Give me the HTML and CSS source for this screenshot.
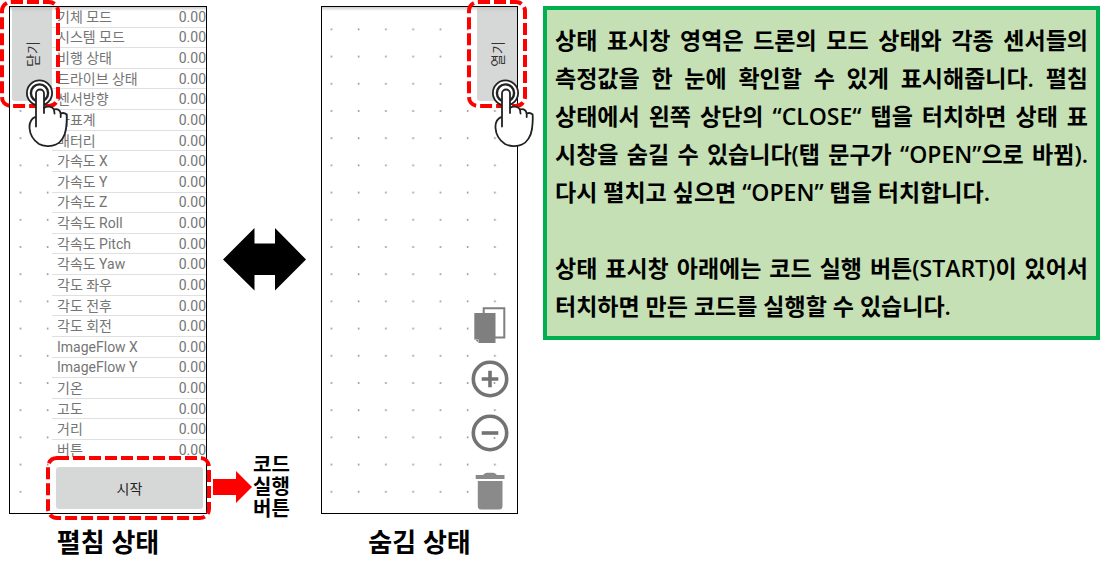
FILE: index.html
```html
<!DOCTYPE html>
<html lang="ko">
<head>
<meta charset="utf-8">
<title>상태 표시창</title>
<link rel="stylesheet" href="styles.css">
</head>
<body>
<svg class="defs" aria-hidden="true">
  <defs>
    <pattern id="dots" width="27.25" height="27.2" patternUnits="userSpaceOnUse">
      <rect x="8.6" y="21.6" width="1.6" height="1.6" fill="#8c8c8c"/>
    </pattern>
    <symbol id="hand" viewBox="0 0 46 70">
      <g fill="#fff" stroke="#222" stroke-width="1.8" stroke-linejoin="round" stroke-linecap="round">
        <circle cx="15.5" cy="15" r="12.6"/>
        <circle cx="15.5" cy="15" r="8.6" stroke-width="2.4"/>
        <path d="M12 38.7C6 41 5.200 45 5.500 50C6 57 9 62 15 66C19 68.300 27 69 32 66.500C37 64.500 41 58 42 51C42.600 46 43 40 42.600 36.500C41 35 39 34.500 36.700 35.500C36 31.500 33 30.500 30 31.500C28 28.300 23 27.500 20 30V15.500A4 4 0 0 0 12 15.500V48.500"/>
        <path d="M20 30V35M30 31.500L30.500 35.500M36.700 35.500V39" fill="none"/>
      </g>
    </symbol>
  </defs>
</svg>
<main class="page">
  <figure class="figure">
    <div class="phone">
      <svg class="canvas" aria-hidden="true"><rect width="43" height="100%" fill="url(#dots)" transform="translate(1 0)"/></svg>
      <div class="open">
        <button class="tab" type="button"><span>닫기</span></button>
        <div class="panel">
          <table class="status">
            <tbody>
              <tr><th scope="row">기체 모드</th><td>0.00</td></tr>
              <tr><th scope="row">시스템 모드</th><td>0.00</td></tr>
              <tr><th scope="row">비행 상태</th><td>0.00</td></tr>
              <tr><th scope="row">드라이브 상태</th><td>0.00</td></tr>
              <tr><th scope="row">센서방향</th><td>0.00</td></tr>
              <tr><th scope="row">좌표계</th><td>0.00</td></tr>
              <tr><th scope="row">배터리</th><td>0.00</td></tr>
              <tr><th scope="row">가속도 X</th><td>0.00</td></tr>
              <tr><th scope="row">가속도 Y</th><td>0.00</td></tr>
              <tr><th scope="row">가속도 Z</th><td>0.00</td></tr>
              <tr><th scope="row">각속도 Roll</th><td>0.00</td></tr>
              <tr><th scope="row">각속도 Pitch</th><td>0.00</td></tr>
              <tr><th scope="row">각속도 Yaw</th><td>0.00</td></tr>
              <tr><th scope="row">각도 좌우</th><td>0.00</td></tr>
              <tr><th scope="row">각도 전후</th><td>0.00</td></tr>
              <tr><th scope="row">각도 회전</th><td>0.00</td></tr>
              <tr><th scope="row">ImageFlow X</th><td>0.00</td></tr>
              <tr><th scope="row">ImageFlow Y</th><td>0.00</td></tr>
              <tr><th scope="row">기온</th><td>0.00</td></tr>
              <tr><th scope="row">고도</th><td>0.00</td></tr>
              <tr><th scope="row">거리</th><td>0.00</td></tr>
              <tr><th scope="row">버튼</th><td>0.00</td></tr>
            </tbody>
          </table>
          <button class="start" type="button">시작</button>
        </div>
      </div>
      <svg class="mark mark-close" width="62" height="110" aria-hidden="true"><rect x="3" y="3" width="56" height="104" rx="9"/></svg>
      <svg class="mark mark-start" width="168" height="66" aria-hidden="true"><rect x="3" y="3" width="161" height="60" rx="9"/></svg>
      <svg class="hand hand-close" width="46" height="70" aria-hidden="true"><use href="#hand"/></svg>
    </div>
    <figcaption class="caption">펼침 상태</figcaption>
  </figure>

  <div class="between">
    <svg class="swap" width="84" height="63" viewBox="0 0 84 63" aria-hidden="true"><path d="M0 31.500L31.500 0V15.500H52V0L83 31.500L52 62.500V47H31.500V62.500Z"/></svg>
    <div class="callout">
      <svg width="40" height="32" viewBox="0 0 40 32" aria-hidden="true"><path d="M0 8H23V0L39 16L23 32V24H0Z" fill="#f00"/></svg>
      <p class="callout-text">코드<br>실행<br>버튼</p>
    </div>
  </div>

  <figure class="figure">
    <div class="phone">
      <svg class="canvas" aria-hidden="true"><rect width="100%" height="100%" fill="url(#dots)"/></svg>
      <div class="closed">
        <button class="tab" type="button"><span>열기</span></button>
        <div class="tools">
          <button class="tool" type="button" aria-label="복사">
            <svg width="38" height="38" viewBox="0 0 38 38"><path d="M12.700 2.300H33.300V31.500H12.700Z" fill="#fff" stroke="#7f7f7f" stroke-width="2"/><path d="M3.300 7H24.500V37H8L3.300 33Z" fill="#7f7f7f"/><path d="M3.500 33.500H7.500V36.500" fill="none" stroke="#b5b5b5"/></svg>
          </button>
          <button class="tool" type="button" aria-label="확대">
            <svg width="38" height="38" viewBox="0 0 38 38"><circle cx="19" cy="19" r="16.700" fill="#fff" stroke="#737373" stroke-width="3.600"/><path d="M10.700 19H27.300M19 10.700V27.300" stroke="#737373" stroke-width="3.600"/><circle cx="23.500" cy="23" r="1" fill="#999"/></svg>
          </button>
          <button class="tool" type="button" aria-label="축소">
            <svg width="38" height="38" viewBox="0 0 38 38"><circle cx="19" cy="19" r="16.700" fill="#fff" stroke="#737373" stroke-width="3.600"/><path d="M10.700 19H27.300" stroke="#737373" stroke-width="3.600"/><circle cx="23.500" cy="24" r="1" fill="#999"/></svg>
          </button>
          <button class="tool tool-trash" type="button" aria-label="삭제">
            <svg width="38" height="38" viewBox="0 0 38 38"><path d="M4.700 3H12Q14 .7 16 .7H22Q24 .7 26 3H33.500V7H4.700Z M6.800 9H31.500V34Q31.500 37.500 28 37.500H10.300Q6.800 37.500 6.800 34Z" fill="#8a8a8a"/></svg>
          </button>
        </div>
      </div>
      <svg class="mark mark-open" width="62" height="110" aria-hidden="true"><rect x="3" y="3" width="56" height="104" rx="9"/></svg>
      <svg class="hand hand-open" width="46" height="70" aria-hidden="true"><use href="#hand"/></svg>
    </div>
    <figcaption class="caption">숨김 상태</figcaption>
  </figure>

  <section class="note">
    <p>
      <span class="line">상태 표시창 영역은 드론의 모드 상태와 각종 센서들의</span>
      <span class="line">측정값을 한 눈에 확인할 수 있게 표시해줍니다. 펼침</span>
      <span class="line">상태에서 왼쪽 상단의 “CLOSE“ 탭을 터치하면 상태 표</span>
      <span class="line">시창을 숨길 수 있습니다(탭 문구가 “OPEN”으로 바뀜).</span>
      <span class="line last">다시 펼치고 싶으면 “OPEN” 탭을 터치합니다.</span>
    </p>
    <p>
      <span class="line">상태 표시창 아래에는 코드 실행 버튼(START)이 있어서</span>
      <span class="line last">터치하면 만든 코드를 실행할 수 있습니다.</span>
    </p>
  </section>
</main>
</body>
</html>
```

FILE: styles.css
```css
* {
  box-sizing: border-box;
}

body {
  margin: 0;
  background: #fff;
  color: #000;
  font-family: "Open Sans", "Noto Sans CJK KR", sans-serif;
}

button {
  margin: 0;
  padding: 0;
  border: 0;
  background: none;
  font-family: Roboto, "Noto Sans CJK KR", sans-serif;
}

svg {
  display: block;
}

.defs {
  position: absolute;
  width: 0;
  height: 0;
}

.page {
  display: flex;
  align-items: flex-start;
  padding: 6px 2px 0 9px;
}

.figure {
  flex: none;
  width: 198px;
  margin: 0;
}

.between + .figure {
  width: 197px;
}

.phone {
  position: relative;
  border: 1px solid #000;
}

.phone::before {
  content: "";
  position: absolute;
  inset: 0 0 auto;
  height: 4px;
  background: linear-gradient(#ccc, #fff0);
}

.canvas {
  position: absolute;
  inset: 0;
  width: 100%;
  height: 100%;
}

.open,
.closed {
  position: relative;
  display: flex;
  min-height: 506px;
}

.open {
  padding-left: 2px;
}

.closed {
  flex-direction: column;
  align-items: flex-end;
  justify-content: space-between;
}

.tab {
  flex: none;
  display: grid;
  place-items: center;
  width: 40px;
  height: 94px;
  border-radius: 0 0 0 3px;
  background: linear-gradient(#c4c6c5, #d6d8d7 5px);
  color: #333;
  font-size: 14px;
}

.tab span {
  transform: rotate(-90deg);
}

.panel {
  flex: 1;
}

.status {
  width: 100%;
  height: 453px;
  border-collapse: collapse;
  color: #757575;
  font-family: Roboto, "Noto Sans CJK KR", sans-serif;
  font-size: 14px;
  line-height: 18px;
}

.status th,
.status td {
  padding: 0;
  border-bottom: 1px solid #e0e0e0;
  font-weight: 400;
}

.status tr:last-child > * {
  border-bottom: 0;
}

.status th {
  padding-left: 5px;
  text-align: left;
}

.status td {
  text-align: right;
}

.start {
  display: block;
  width: calc(100% - 7px);
  height: 42px;
  margin: 7px 3px 4px 4px;
  border-radius: 3px;
  background: #d6d8d7;
  color: #222;
  font-size: 14px;
}

.mark {
  position: absolute;
  fill: none;
  stroke: #f00;
  stroke-width: 4;
  stroke-dasharray: 12 4;
}

.mark-close {
  left: -11px;
  top: -8px;
}

.mark-open {
  left: 144px;
  top: -8px;
}

.mark-start {
  left: 35px;
  top: 448px;
}

.hand {
  position: absolute;
  top: 71px;
}

.hand-close {
  left: 14px;
}

.hand-open {
  left: 168px;
}

.tools {
  display: flex;
  flex-direction: column;
  gap: 16px;
  padding: 0 8px 3px 0;
}

.tool {
  width: 38px;
  height: 38px;
}

.tool-trash {
  margin-top: 4px;
}

.caption {
  margin-top: 10px;
  font-size: 26px;
  font-weight: 700;
  line-height: 36px;
  text-align: center;
}

.between {
  flex: none;
  width: 114px;
  padding: 222px 0 0 6px;
}

.swap {
  margin-left: 10px;
}

.callout {
  display: flex;
  align-items: center;
  margin-top: 163px;
}

.callout-text {
  margin: 0;
  font-family: Roboto, "Noto Sans CJK KR", sans-serif;
  font-size: 20px;
  font-weight: 700;
  line-height: 22px;
}

.note {
  flex: 1;
  min-width: 0;
  margin-left: 25px;
  padding: 11px 8px;
  border: 4px solid #00b050;
  background: #c5e0b4;
  font-size: 23px;
  font-weight: 600;
  line-height: 38px;
}

.note p {
  margin: 0;
}

.note p + p {
  margin-top: 38px;
}

.line {
  display: block;
  text-align-last: justify;
  white-space: nowrap;
}

.last {
  text-align-last: left;
}
```
